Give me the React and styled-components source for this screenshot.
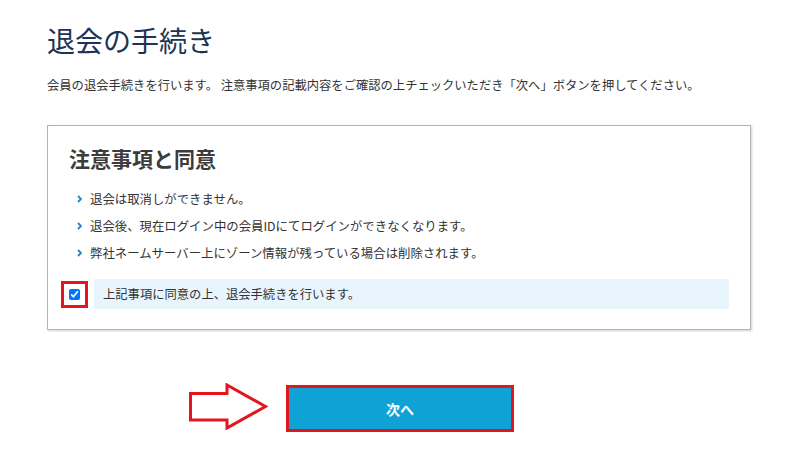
import React from 'react';
import styled, { createGlobalStyle } from 'styled-components';

const GlobalStyle = createGlobalStyle`
  html, body {
    margin: 0;
    padding: 0;
    background: #fff;
  }
  body {
    font-family: "Noto Sans CJK JP", "Liberation Sans", sans-serif;
    color: #333;
    text-spacing-trim: space-all;
  }
`;

const Page = styled.main`
  padding: 20px 49px 0 47px;
`;

const Title = styled.h1`
  margin: 0;
  font-size: 28px;
  line-height: 40px;
  font-weight: 400;
  color: #1c3553;
`;

const Lead = styled.p`
  margin: 15px 0 0;
  font-size: 12.3px;
  line-height: 20px;
  color: #333;
  white-space: nowrap;
`;

const Panel = styled.section`
  margin-top: 30px;
  border: 1px solid #b4b4b4;
  box-shadow: 1px 1px 2px rgba(0, 0, 0, 0.18);
  padding: 17px 21px 20px;
  background: #fff;
`;

const PanelTitle = styled.h2`
  margin: 0;
  font-size: 21px;
  line-height: 30px;
  font-weight: 700;
  color: #3c3c3c;
`;

const Notes = styled.ul`
  list-style: none;
  margin: 12px 0 0;
  padding: 0 0 0 8px;
`;

const Note = styled.li`
  display: flex;
  align-items: center;
  gap: 8px;
  height: 27px;
  font-size: 12.4px;
  color: #333;
`;

const Chevron = () => (
  <svg width="5" height="8" viewBox="0 0 5 8" aria-hidden="true">
    <path d="M1 1 L4 4 L1 7" fill="none" stroke="#1d86c5" strokeWidth="1.8" />
  </svg>
);

const AgreeRow = styled.label`
  display: flex;
  align-items: center;
  gap: 6px;
  margin: 13px 0 0 -8px;
`;

const Mark = styled.span`
  box-sizing: border-box;
  width: 27px;
  height: 27px;
  border: 3px solid #e3161f;
  display: flex;
  align-items: center;
  justify-content: center;

  input {
    margin: 0;
    width: 11px;
    height: 11px;
    accent-color: #0075ff;
  }
`;

const AgreeText = styled.span`
  flex: 1;
  height: 30px;
  display: flex;
  align-items: center;
  padding-left: 9px;
  background: #e8f5fc;
  font-size: 12.3px;
  color: #333;
`;

const Actions = styled.div`
  display: flex;
  justify-content: center;
  margin-top: 55px;
  padding-left: 2px;
`;

const ButtonWrap = styled.div`
  position: relative;
`;

const Pointer = styled.svg`
  position: absolute;
  right: calc(100% + 18px);
  top: -2px;
`;

const NextButton = styled.button`
  box-sizing: border-box;
  width: 228px;
  height: 47px;
  border: 3px solid #e3161f;
  background: #0fa3d5;
  color: #fff;
  font-family: inherit;
  font-size: 14px;
  font-weight: 700;
  cursor: pointer;
`;

export default function App() {
  return (
    <>
      <GlobalStyle />
      <Page>
        <Title>退会の手続き</Title>
        <Lead>
          会員の退会手続きを行います。 注意事項の記載内容をご確認の上チェックいただき「次へ」ボタンを押してください。
        </Lead>
        <Panel>
          <PanelTitle>注意事項と同意</PanelTitle>
          <Notes>
            <Note><Chevron />退会は取消しができません。</Note>
            <Note><Chevron />退会後、現在ログイン中の会員IDにてログインができなくなります。</Note>
            <Note><Chevron />弊社ネームサーバー上にゾーン情報が残っている場合は削除されます。</Note>
          </Notes>
          <AgreeRow>
            <Mark>
              <input type="checkbox" defaultChecked />
            </Mark>
            <AgreeText>上記事項に同意の上、退会手続きを行います。</AgreeText>
          </AgreeRow>
        </Panel>
        <Actions>
          <ButtonWrap>
            <Pointer width="80" height="47" viewBox="0 0 80 47" aria-hidden="true">
              <polygon
                points="2.5,10.5 39,10.5 39,2 77.5,23.5 39,45 39,37 2.5,37"
                fill="#fff"
                stroke="#e3161f"
                strokeWidth="3"
                strokeLinejoin="miter"
              />
            </Pointer>
            <NextButton type="button">次へ</NextButton>
          </ButtonWrap>
        </Actions>
      </Page>
    </>
  );
}
